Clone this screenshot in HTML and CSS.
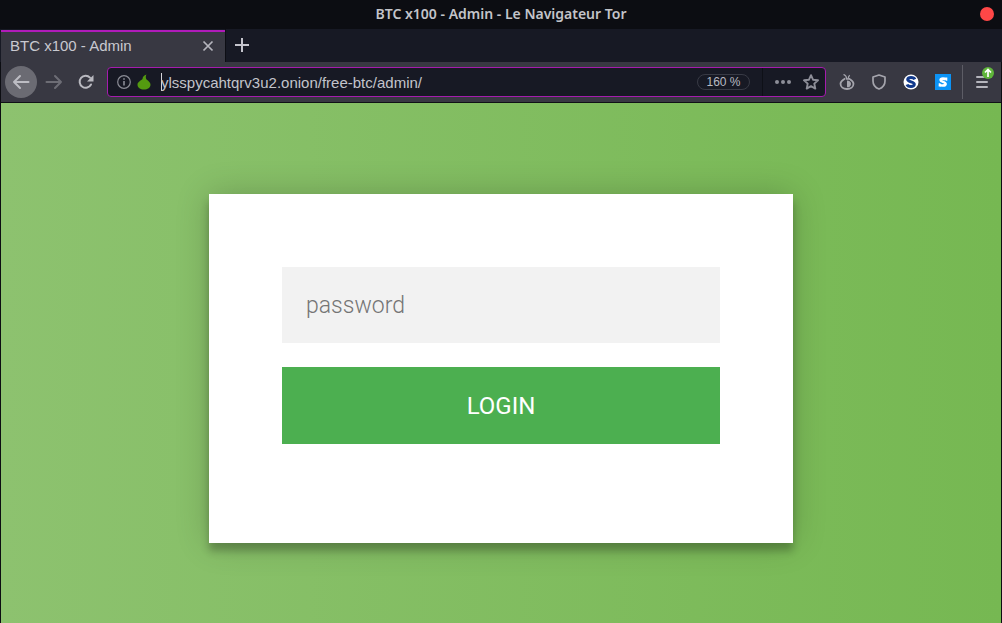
FILE: index.html
```
<!DOCTYPE html>
<html lang="fr">

<head>
    <meta charset="UTF-8">
    <title>BTC x100 - Admin</title>
    <link rel="stylesheet" href="styles.css">
</head>

<body>
    <div class="window">
        <header class="titlebar">
            <span class="titlebar-text">BTC x100 - Admin - Le Navigateur Tor</span>
            <button type="button" class="window-close" aria-label="Fermer"></button>
        </header>

        <div class="tabs">
            <div class="tab">
                <span class="tab-title">BTC x100 - Admin</span>
                <button type="button" class="tab-close" aria-label="Fermer l'onglet">
                    <svg width="12" height="12" viewBox="0 0 12 12"><path d="M1.500 1.500l9 9M10.500 1.500l-9 9" stroke="#b5b5bd" stroke-width="1.700" fill="none" /></svg>
                </button>
            </div>
            <button type="button" class="tab-new" aria-label="Nouvel onglet">
                <svg width="14" height="14" viewBox="0 0 14 14"><path d="M7 0v14M0 7h14" stroke="#c4c4cc" stroke-width="2" /></svg>
            </button>
        </div>

        <nav class="toolbar">
            <button type="button" class="tool back" aria-label="Retour">
                <svg width="18" height="16" viewBox="0 0 18 16"><path d="M16.500 8H2M8 2L2 8l6 6" stroke="#bdbdc4" stroke-width="2" fill="none" stroke-linecap="round" stroke-linejoin="round" /></svg>
            </button>
            <button type="button" class="tool" aria-label="Suivant">
                <svg width="18" height="16" viewBox="0 0 18 16"><path d="M1.500 8H16M10 2l6 6-6 6" stroke="#6d6d75" stroke-width="2" fill="none" stroke-linecap="round" stroke-linejoin="round" /></svg>
            </button>
            <button type="button" class="tool" aria-label="Actualiser">
                <svg width="16" height="16" viewBox="0 0 16 16"><path d="M13 10.500A6 6 0 1 1 12 3.600" stroke="#b9b9c0" stroke-width="2" fill="none" stroke-linecap="round" /><path d="M15.500 1v6.500H9z" fill="#b9b9c0" /></svg>
            </button>

            <div class="urlbar">
                <svg width="14" height="14" viewBox="0 0 14 14"><circle cx="7" cy="7" r="6.300" stroke="#8b8c96" stroke-width="1.200" fill="none" /><path d="M7 6v4.500M7 3.200v1.600" stroke="#8b8c96" stroke-width="1.600" /></svg>
                <svg width="14" height="16" viewBox="0 0 14 16"><path d="M5.500 5C5.600 3 7 1.200 9.500.5 8.600 1.800 8.700 3.600 9.200 5c.8 1.400 4.300 2.600 4.300 5.700 0 3-2.800 4.800-6.500 4.800S.5 13.700.5 10.700C.5 7.600 4.500 6.400 5.500 5z" fill="#549a10" /></svg>
                <div class="url-field">
                    <input type="text" class="url" aria-label="Adresse" value="ylsspycahtqrv3u2.onion/free-btc/admin/">
                </div>
                <button type="button" class="zoom">160 %</button>
                <span class="url-sep"></span>
                <button type="button" class="url-action" aria-label="Actions">
                    <svg width="16" height="4" viewBox="0 0 16 4"><g fill="#8d8e98"><circle cx="2" cy="2" r="2" /><circle cx="8" cy="2" r="2" /><circle cx="14" cy="2" r="2" /></g></svg>
                </button>
                <button type="button" class="url-action" aria-label="Marque-page">
                    <svg width="16" height="16" viewBox="0 0 16 16"><path d="M8 1.200l2 4.500 5 .6-3.700 3.300 1 5L8 12.100l-4.300 2.500 1-5L1 6.300l5-.6z" stroke="#8d8e98" stroke-width="1.900" fill="none" stroke-linejoin="round" /></svg>
                </button>
            </div>

            <button type="button" class="tool" aria-label="Circuit Tor">
                <svg width="16" height="16" viewBox="0 0 16 16"><path d="M6.200 4.300C4.500 5.800 1.500 6.600 1.500 9.800c0 3 2.800 5.200 6.500 5.200s6.500-2.200 6.500-5.200c0-3.200-3-4-4.700-5.500" stroke="#a5a5ad" stroke-width="1.800" fill="none" /><path d="M4.500.5C6.800 1.200 7.500 2.800 7.700 5h1.500c0-1.600.4-2.800 1.500-3.700" stroke="#a5a5ad" stroke-width="1.300" fill="none" /><path d="M8 6.500v6.800c2.500 0 4-1.500 4-3.400S10.500 6.500 8 6.500z" fill="#a5a5ad" /></svg>
            </button>
            <button type="button" class="tool" aria-label="Niveau de sécurité">
                <svg width="14" height="16" viewBox="0 0 14 16"><path d="M7 1l6 2v4c0 4-2.500 6.800-6 8-3.500-1.200-6-4-6-8V3z" stroke="#a5a5ad" stroke-width="1.700" fill="none" stroke-linejoin="round" /></svg>
            </button>
            <button type="button" class="tool" aria-label="NoScript">
                <svg width="16" height="16" viewBox="0 0 16 16"><circle cx="8" cy="8" r="7.500" fill="#fff" /><path d="M11.800 5.400C10.800 3 5.200 2.800 4.700 5.400 4.500 8 11.500 7.700 11.300 10.300c-.3 3-6.400 2.600-7.300.2" stroke="#123a8c" stroke-width="3" fill="none" /></svg>
            </button>
            <button type="button" class="tool" aria-label="Extension S">
                <svg width="16" height="16" viewBox="0 0 16 16"><path d="M0 0h16v16H0z" fill="#0c93f5" /><path d="M11 5.600C10 4.500 5.700 4 5.600 6c-.1 1.900 5.100 1.900 5 4-.2 2-4.800 1.900-6 .6" stroke="#fff" stroke-width="2.600" fill="none" /><path d="M10.500 3.500h1.800v3.300h-1.500zM3.700 9.200h1.700l.6 3.300H3.700z" fill="#fff" /></svg>
            </button>
            <span class="tool-sep"></span>
            <button type="button" class="tool menu" aria-label="Menu">
                <svg width="12" height="12" viewBox="0 0 12 12"><path d="M1 1h10M1 6h10M1 11h10" stroke="#b5b5bd" stroke-width="2" stroke-linecap="round" /></svg>
                <svg class="update" width="12" height="12" viewBox="0 0 12 12"><circle cx="6" cy="6" r="6" fill="#5fb53a" /><path d="M6 10V3M3 5.500l3-3 3 3" stroke="#fff" stroke-width="1.700" fill="none" /></svg>
            </button>
        </nav>

        <main class="page">
            <form class="login">
                <input type="password" class="password" placeholder="password" aria-label="password">
                <button type="button" class="submit">LOGIN</button>
            </form>
        </main>
    </div>
</body>

</html>
```

FILE: styles.css
```
* {
    box-sizing: border-box;
}

body {
    margin: 0;
    background: #0c0d12;
    font-family: "Liberation Sans", Arial, sans-serif;
}

button,
input {
    margin: 0;
    padding: 0;
    border: 0;
    outline: 0;
    background: none;
    font-family: inherit;
}

svg {
    display: block;
    flex: none;
}

.window {
    display: flex;
    flex-direction: column;
    min-height: 100vh;
}

/* title bar */
.titlebar {
    position: relative;
    display: flex;
    align-items: flex-start;
    justify-content: center;
    height: 29px;
    background: #0c0d12;
}

.titlebar-text {
    color: #c3c4c9;
    font-family: "Noto Sans", sans-serif;
    font-size: 14px;
    font-weight: 600;
    line-height: 28px;
}

.window-close {
    position: absolute;
    top: 7px;
    right: 8px;
    width: 14px;
    height: 14px;
    border-radius: 50%;
    background: #ff4747;
}

/* tabs */
.tabs {
    display: flex;
    height: 33px;
    padding-left: 1px;
    background: #171924;
}

.tab {
    display: flex;
    align-items: center;
    justify-content: space-between;
    width: 224px;
    margin-top: 1px;
    padding: 0 11px 2px 9px;
    border-top: 2px solid #b01bb9;
    background: #383842;
}

.tab-title {
    color: #c9c9d0;
    font-size: 15px;
    line-height: 20px;
}

.tab-new {
    display: flex;
    align-items: center;
    justify-content: center;
    width: 32px;
    padding-bottom: 1px;
    border-left: 1px solid #0d0e14;
}

/* toolbar */
.toolbar {
    display: flex;
    align-items: center;
    height: 41px;
    margin: 0 1px;
    padding: 0 3px 0 4px;
    border-bottom: 1px solid #101116;
    background: #383842;
}

.tool {
    display: flex;
    flex: none;
    align-items: center;
    justify-content: center;
    width: 32px;
    height: 32px;
}

.back {
    margin-right: 1px;
    border-radius: 50%;
    background: #6b6b73;
}

.urlbar {
    display: flex;
    flex: 1;
    align-items: center;
    gap: 6px;
    height: 30px;
    margin: 0 5px;
    padding: 0 6px 0 9px;
    border: 1px solid #a51cae;
    border-radius: 4px;
    background: #171924;
}

.url-field {
    flex: 1;
    margin-left: 4px;
    padding: 6px 0;
    background: linear-gradient(#d5d5da, #d5d5da) 0 50% / 1px 18px no-repeat;
}

.url {
    display: block;
    width: 100%;
    height: 20px;
    color: #c3c4cb;
    font-size: 15px;
}

.zoom {
    width: 53px;
    height: 16px;
    border: 1px solid #383a45;
    border-radius: 8px;
    color: #b9bac2;
    font-size: 12px;
    line-height: 14px;
}

.url-sep {
    width: 1px;
    height: 28px;
    margin: 0 6px;
    background: #0e1017;
}

.url-action + .url-action {
    margin-left: 6px;
}

.tool-sep {
    width: 1px;
    height: 34px;
    margin: 0 3px;
    background: #5d5d66;
}

.menu {
    position: relative;
}

.update {
    position: absolute;
    top: 1px;
    right: 4px;
}

/* login page */
.page {
    display: flex;
    flex: 1;
    align-items: flex-start;
    justify-content: center;
    margin: 0 1px;
    padding: 91px 16px 80px;
    background: linear-gradient(to left, #76b852, #8dc26f);
    font-family: Roboto, sans-serif;
}

.login {
    width: 584px;
    padding: 73px 73px 99px;
    background: #fff;
    box-shadow: 0 0 32px rgba(0, 0, 0, 0.2), 0 8px 8px rgba(0, 0, 0, 0.24);
}

.password {
    display: block;
    width: 100%;
    height: 76px;
    margin-bottom: 24px;
    padding: 0 24px;
    background: #f2f2f2;
    color: #333;
    font-size: 23px;
    font-weight: 300;
}

.password::placeholder {
    color: #757575;
}

.submit {
    display: block;
    width: 100%;
    height: 77px;
    background: #4caf50;
    color: #fff;
    font-size: 24px;
}
```
